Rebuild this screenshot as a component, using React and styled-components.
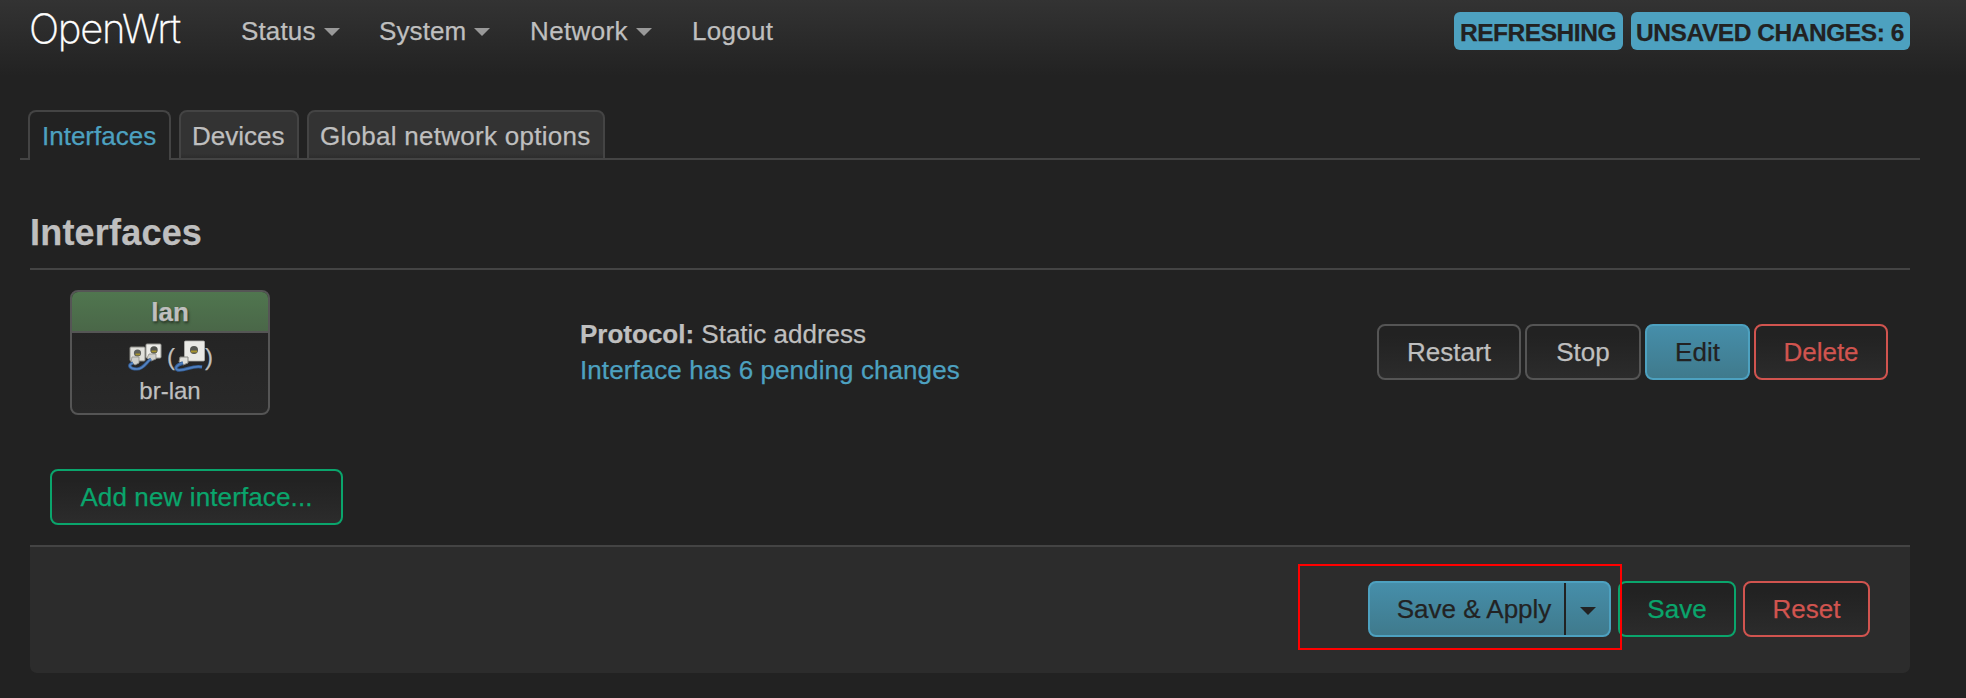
import React from 'react';
import styled, { createGlobalStyle, css } from 'styled-components';

const GlobalStyle = createGlobalStyle`
  * { box-sizing: border-box; }
  body {
    margin: 0;
    height: 698px;
    overflow: hidden;
    background: #222;
    color: #bfbfbf;
    font: 26px/36px "Liberation Sans", Arial, sans-serif;
    -webkit-text-stroke: 0.25px;
  }
`;

const Header = styled.header`
  display: flex;
  align-items: flex-start;
  height: 80px;
  padding: 0 56px 0 29px;
  background: linear-gradient(#333 0, #222 76px);
`;

const Brand = styled.a`
  width: 212px;
  padding-top: 5px;
  font: 200 40px/48px Inter, "Liberation Sans", sans-serif;
  letter-spacing: -1.3px;
  color: #fff;
  -webkit-text-stroke: 0.35px;
`;

const Nav = styled.nav`
  display: flex;
  flex: 1;
  padding-top: 13px;
`;

const NavItem = styled.a`
  display: flex;
  width: ${(p) => p.$width}px;
  letter-spacing: ${(p) => p.$track || 0}px;
`;

const Caret = styled.span`
  width: 0;
  height: 0;
  margin: 15px 0 0 8px;
  border: 8px solid transparent;
  border-top-color: #999;
  border-bottom: 0;
`;

const Badges = styled.div`
  display: flex;
  gap: 8px;
  padding-top: 12px;
`;

const Badge = styled.span`
  width: ${(p) => p.$width}px;
  height: 38px;
  padding-right: 1px;
  border-radius: 6px;
  background: #4da1c0;
  color: #222;
  font-weight: bold;
  font-size: 24.5px;
  line-height: 41px;
  letter-spacing: -0.45px;
  text-align: center;
  white-space: nowrap;
`;

const Tabs = styled.div`
  display: flex;
  gap: 8px;
  height: 50px;
  margin: 30px 46px 0 20px;
  padding-left: 8px;
  background: linear-gradient(#444, #444) bottom / 100% 2px no-repeat;
`;

const Tab = styled.a`
  width: ${(p) => p.$width}px;
  height: 50px;
  padding-left: ${(p) => (p.$active ? 12 : 11)}px;
  border: 2px solid #444;
  border-radius: 8px 8px 0 0;
  background: linear-gradient(#333 90%, #2c2c2c);
  line-height: 48px;
  letter-spacing: ${(p) => p.$track || 0}px;
  white-space: nowrap;
  ${(p) => p.$active && css`
    border-bottom: 0;
    background: #222;
    color: #4da1c0;
  `}
`;

const Content = styled.main`
  margin: 0 56px 0 30px;
`;

const Title = styled.h2`
  height: 110px;
  margin: 0;
  padding-top: 49px;
  border-bottom: 2px solid #444;
  font-size: 36px;
  line-height: 48px;
  letter-spacing: 0.2px;
`;

const Row = styled.section`
  display: flex;
  align-items: flex-start;
  height: 199px;
  padding: 20px 22px 0 40px;
`;

const IfaceBox = styled.div`
  width: 200px;
  height: 125px;
  border: 2px solid #555;
  border-radius: 8px;
  overflow: hidden;
  background: linear-gradient(#222, #292929);
  text-align: center;
`;

const IfaceHead = styled.div`
  height: 41px;
  border-bottom: 2px solid #555;
  background: linear-gradient(#50764f, #4a6748);
  font-weight: bold;
  line-height: 40px;
  text-shadow: 1px 2px 3px rgba(0, 0, 0, 0.6);
`;

const IfaceBody = styled.div`
  font-size: 24px;
  line-height: 30px;
`;

const Ports = styled.div`
  display: flex;
  justify-content: center;
  height: 43px;
  padding: 7px 0 0 1px;
  line-height: 34px;
`;

const Bridge = styled.svg`
  width: 34px;
  height: 32px;
  margin-right: 5px;
`;

const Ethernet = styled.svg`
  width: 32px;
  height: 32px;
  margin: 0 -1px;
`;

const Info = styled.div`
  width: 797px;
  margin-left: 310px;
  padding-top: 26px;
`;

const Line = styled.div`
  letter-spacing: ${(p) => p.$track || 0}px;
  color: ${(p) => (p.$link ? '#4da1c0' : '#bfbfbf')};
`;

const Actions = styled.div`
  display: flex;
  gap: 4px;
  padding-top: 34px;
`;

const tones = {
  neutral: ['#555', '#bfbfbf'],
  positive: ['#0aa56c', '#0aa56c'],
  negative: ['#d1544f', '#d1544f'],
  action: ['#4da1c0', '#222'],
};

const Button = styled.button`
  display: flex;
  justify-content: center;
  width: ${(p) => p.$width}px;
  height: 56px;
  padding: 0;
  border: 2px solid ${(p) => tones[p.$tone][0]};
  border-radius: 8px;
  background: ${(p) => (p.$tone === 'action'
    ? 'linear-gradient(#468fab, #3f798b)'
    : 'linear-gradient(#222 20%, #2c2c2c)')};
  background-origin: border-box;
  color: ${(p) => tones[p.$tone][1]};
  font: inherit;
  line-height: 52px;
  letter-spacing: ${(p) => p.$track || 0}px;
  white-space: nowrap;
`;

const AddRow = styled.div`
  height: 76px;
  padding-left: 20px;
`;

const Footer = styled.footer`
  display: flex;
  justify-content: flex-end;
  gap: 7px;
  height: 128px;
  padding: 34px 40px 0 0;
  border-top: 2px solid #444;
  border-radius: 0 0 7px 7px;
  background: #2c2c2c;
`;

const ApplyGroup = styled.div`
  position: relative;
`;

const ApplyLabel = styled.span`
  width: 196px;
  border-right: 2px solid #222;
  padding-left: 14px;
`;

const ApplyArrow = styled.span`
  display: flex;
  justify-content: center;
  flex: 1;
  padding-top: 24px;

  &::after {
    content: "";
    height: 0;
    border: 8px solid transparent;
    border-top-color: #222;
    border-bottom: 0;
  }
`;

const Highlight = styled.div`
  position: absolute;
  top: -17px;
  left: -70px;
  z-index: 1;
  width: 324px;
  height: 86px;
  border: 2px solid #f00;
  pointer-events: none;
`;

function BridgeIcon() {
  return (
    <Bridge viewBox="0 0 34 32">
      <rect x="2" y="7" width="15" height="14" rx="1" fill="#e0e0db" stroke="#8a8a85" strokeWidth="1" />
      <circle cx="9.5" cy="13" r="3.6" fill="#5d5f5b" />
      <rect x="7.5" y="13.5" width="4.5" height="1.8" fill="#a3922f" />
      <rect x="18" y="4" width="15" height="14" rx="1" fill="#ecece8" stroke="#9a9a95" strokeWidth="1" />
      <circle cx="26" cy="10" r="3.7" fill="#525450" />
      <rect x="23.5" y="10.5" width="5" height="1.8" fill="#a3922f" />
      <path d="M4 17h7v6l-4 2-4-3zM21 14h7v5l-5 2-4-3z" fill="#d0d0cb" stroke="#8f8f8a" strokeWidth="0.8" />
      <path d="M5 23C-1 25 2 29 9 29c7 0 9-7 14-10" fill="none" stroke="#345f99" strokeWidth="3.2" />
      <path d="M5 23C-1 25 2 29 9 29c7 0 9-7 14-10" fill="none" stroke="#5785c2" strokeWidth="1.5" />
    </Bridge>
  );
}

function EthernetIcon() {
  return (
    <Ethernet viewBox="0 0 32 32">
      <rect x="10.5" y="1" width="20" height="20" rx="1" fill="#e9e9e5" stroke="#b3b3ae" strokeWidth="0.8" />
      <circle cx="20" cy="10" r="4" fill="#555752" />
      <rect x="17" y="10.5" width="6" height="2" fill="#a8952d" />
      <path d="M6 17h8v6l-5 2-4-3z" fill="#deded9" stroke="#888883" strokeWidth="1" />
      <path d="M9 23C2 25 0 29 4 30c8 1 14-5 24-3" fill="none" stroke="#345f99" strokeWidth="3.4" />
      <path d="M9 23C2 25 0 29 4 30c8 1 14-5 24-3" fill="none" stroke="#4f7fbd" strokeWidth="1.6" />
    </Ethernet>
  );
}

export default function App() {
  return (
    <>
      <GlobalStyle />
      <Header>
        <Brand>OpenWrt</Brand>
        <Nav>
          <NavItem $width={138} $track={0.15}>Status<Caret /></NavItem>
          <NavItem $width={151} $track={0.1}>System<Caret /></NavItem>
          <NavItem $width={162} $track={0.35}>Network<Caret /></NavItem>
          <NavItem $width={90} $track={0.3}>Logout</NavItem>
        </Nav>
        <Badges>
          <Badge $width={169}>REFRESHING</Badge>
          <Badge $width={279}>UNSAVED CHANGES: 6</Badge>
        </Badges>
      </Header>
      <Tabs>
        <Tab $active $width={143}>Interfaces</Tab>
        <Tab $width={120}>Devices</Tab>
        <Tab $width={298} $track={0.27}>Global network options</Tab>
      </Tabs>
      <Content>
        <Title>Interfaces</Title>
        <Row>
          <IfaceBox>
            <IfaceHead>lan</IfaceHead>
            <IfaceBody>
              <Ports><BridgeIcon />(<EthernetIcon />)</Ports>
              br-lan
            </IfaceBody>
          </IfaceBox>
          <Info>
            <Line><b>Protocol:</b> Static address</Line>
            <Line $link $track={0.08}>Interface has 6 pending changes</Line>
          </Info>
          <Actions>
            <Button $tone="neutral" $width={144}>Restart</Button>
            <Button $tone="neutral" $width={116}>Stop</Button>
            <Button $tone="action" $width={105}>Edit</Button>
            <Button $tone="negative" $width={134}>Delete</Button>
          </Actions>
        </Row>
        <AddRow>
          <Button $tone="positive" $width={293} $track={0.12}>Add new interface...</Button>
        </AddRow>
        <Footer>
          <ApplyGroup>
            <Button $tone="action" $width={243}>
              <ApplyLabel>Save &amp; Apply</ApplyLabel>
              <ApplyArrow />
            </Button>
            <Highlight />
          </ApplyGroup>
          <Button $tone="positive" $width={118}>Save</Button>
          <Button $tone="negative" $width={127}>Reset</Button>
        </Footer>
      </Content>
    </>
  );
}
